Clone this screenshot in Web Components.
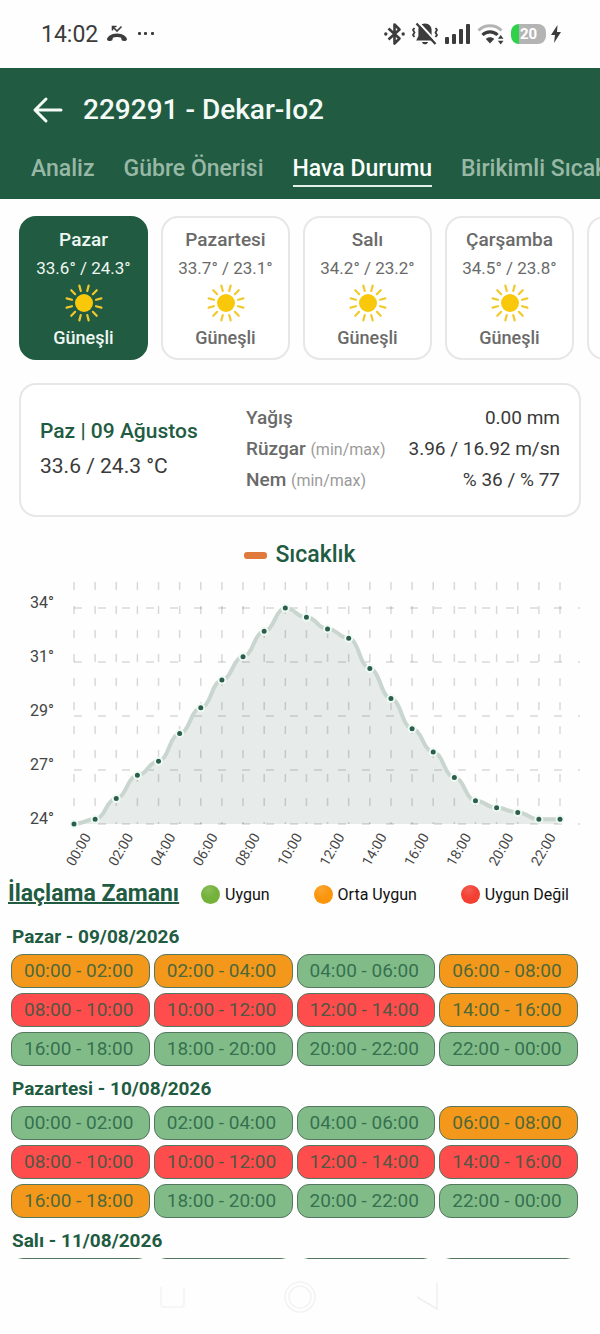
<!DOCTYPE html>
<html lang="tr">
<head>
<meta charset="utf-8">
<meta name="viewport" content="width=device-width, initial-scale=1">
<title>229291 - Dekar-Io2</title>
<style>
  :root {
    --green: #215b41;
    --line: #e7e7e7;
    --gray: #6a6a6a;
    --dark: #3a3a3a;
  }
  body {
    margin: 0;
    background: #fefefe;
    font-family: Roboto, "Liberation Sans", sans-serif;
  }
</style>
</head>
<body>
<weather-page></weather-page>

<script>
const define = (tagName, html, setup) => {
  const template = document.createElement('template');
  template.innerHTML = html;
  window.customElements.define(tagName, class extends HTMLElement {
    constructor() {
      super();
      this.attachShadow({ mode: 'open' });
      this.shadowRoot.appendChild(template.content.cloneNode(true));
    }

    connectedCallback() {
      if (setup) {
        setup(this, this.shadowRoot);
      }
    }
  });
};

define('status-bar', `
  <style>
    :host {
      display: flex;
      align-items: center;
      justify-content: space-between;
      height: 68px;
      padding: 0 39px 0 41px;
      box-sizing: border-box;
      color: #3c3c3c;
      font-size: 23px;
    }
    div { display: flex; align-items: center; gap: 8px; }
    svg { display: block; }
    .icons { gap: 7px; }
    .battery {
      display: flex;
      align-items: center;
      justify-content: center;
      width: 35px;
      height: 20px;
      border-radius: 8px;
      background: linear-gradient(90deg, #2fd14b 8px, #b4b4b4 8px);
      color: #fff;
      font-size: 15px;
      font-weight: 700;
    }
    .power { gap: 5px; }
  </style>
  <div>
    <span>14:02</span>
    <svg width="22" height="18" viewBox="0 0 22 18" aria-hidden="true">
      <path d="M1 14.5c0-2.500 4-6 10-6s10 3.500 10 6c-.8 1.800-3.800 1.900-5.300.8l-.6-2.600c-2.600-1-5.600-1-8.200 0l-.6 2.600c-1.500 1.100-4.500 1-5.300-.8z" fill="currentColor"/>
      <path d="M6.500 5.500V1.500h4M7 2l4 4 4.500-4.500" fill="none" stroke="currentColor" stroke-width="1.600"/>
    </svg>
    <svg width="20" height="6" viewBox="0 0 20 6" fill="currentColor" aria-hidden="true">
      <rect x="2" y="1" width="3" height="3" rx="1"/><rect x="8" y="1" width="3" height="3" rx="1"/><rect x="15" y="1" width="3" height="3" rx="1"/>
    </svg>
  </div>
  <div class="icons">
    <svg width="21" height="24" viewBox="0 0 21 24" aria-hidden="true">
      <path d="M4.500 6.500l11 10-5 5V2.500l5 5-11 10" fill="none" stroke="currentColor" stroke-width="2.600" stroke-linejoin="round"/>
      <circle cx="1.800" cy="12" r="1.700" fill="currentColor"/><circle cx="19.200" cy="12" r="1.700" fill="currentColor"/>
    </svg>
    <svg width="26" height="24" viewBox="0 0 26 24" aria-hidden="true">
      <path d="M13 1.500c4.200 0 6.600 3 6.600 6.500V14l2.200 4.500H4.200L6.400 14V8c0-3.500 2.400-6.500 6.600-6.500zM10 20h6c-.4 1.600-1.500 2.300-3 2.300S10.400 21.600 10 20z" fill="currentColor"/>
      <path d="M2.500 6l-1.500 2 1.500 2.500L1 13l1.500 2M23.500 6L25 8l-1.500 2.500L25 13l-1.500 2" fill="none" stroke="currentColor" stroke-width="1.800"/>
      <path d="M6.500 .5L25 20.500" stroke="#fefefe" stroke-width="2.200"/>
      <path d="M4.500 1.500L23.500 22" stroke="currentColor" stroke-width="2.200"/>
    </svg>
    <svg width="25" height="22" viewBox="0 0 25 22" fill="currentColor" aria-hidden="true">
      <rect x="0" y="14" width="4" height="7" rx="1"/><rect x="7" y="11" width="4" height="10" rx="1"/>
      <rect x="14" y="6" width="4" height="15" rx="1"/><rect x="21" y="1" width="4" height="20" rx="1"/>
    </svg>
    <svg width="27" height="22" viewBox="0 0 27 22" aria-hidden="true">
      <path d="M1.500 7.500c6-6.300 17-6.300 23 0" fill="none" stroke="#b4b4b4" stroke-width="3"/>
      <path d="M5.500 12c4-4.300 11-4.300 15 0" fill="none" stroke="currentColor" stroke-width="3.200"/>
      <path d="M8.800 16c2.200-2.300 6.200-2.300 8.400 0L13 20.500z" fill="currentColor"/>
      <path d="M23.700 12l2.800 3.800h-5.600zM23.700 21.500l2.800-3.800h-5.600z" fill="currentColor"/>
    </svg>
    <div class="power">
      <span class="battery">20</span>
      <svg width="10" height="20" viewBox="0 0 10 20" aria-hidden="true">
        <path d="M6.500 1L0 11h4l-1 8 7-11H6z" fill="currentColor"/>
      </svg>
    </div>
  </div>
`);

define('app-header', `
  <style>
    :host {
      display: block;
      background: var(--green);
      color: #f4faf6;
    }
    header {
      display: flex;
      align-items: center;
      gap: 20px;
      padding: 24px 32px 0;
    }
    button {
      padding: 0;
      border: 0;
      background: none;
      color: inherit;
      cursor: pointer;
    }
    svg { display: block; }
    h1 {
      margin: 0;
      font-size: 28px;
      line-height: 36px;
      font-weight: 500;
    }
    nav {
      display: flex;
      gap: 29px;
      padding: 24px 31px 12px;
      overflow: hidden;
    }
    a {
      flex: none;
      border-bottom: 2px solid transparent;
      color: #98b8a6;
      font-size: 23px;
      line-height: 33px;
      font-weight: 500;
      text-decoration: none;
    }
    a[aria-current] {
      border-color: #e3efe8;
      color: #fafffc;
    }
  </style>
  <header>
    <button type="button" aria-label="Geri">
      <svg width="31" height="28" viewBox="0 0 31 28" fill="none" stroke="currentColor" stroke-width="3" stroke-linecap="round" stroke-linejoin="round">
        <path d="M14 3L3 14l11 11M3 14h26"/>
      </svg>
    </button>
    <h1>229291 - Dekar-Io2</h1>
  </header>
  <nav>
    <a href="#analiz">Analiz</a>
    <a href="#gubre">Gübre Önerisi</a>
    <a href="#hava" aria-current="page">Hava Durumu</a>
    <a href="#birikimli">Birikimli Sıcaklık</a>
  </nav>
`);

define('sun-icon', `
  <style>
    :host, svg { display: block; }
  </style>
  <svg width="38" height="38" viewBox="-19 -19 38 38" aria-hidden="true">
    <circle r="9" fill="#f9c80a"/>
    <g stroke="#f2c92c" stroke-width="2.200" stroke-linecap="round"></g>
  </svg>
`, (host, root) => {
  let rays = '';
  for (let angle = 15; angle < 375; angle += 30) {
    rays += `<line y1="12.500" y2="18" transform="rotate(${angle})"/>`;
  }
  root.querySelector('g').innerHTML = rays;
});

define('day-card', `
  <style>
    :host { display: block; flex: none; width: 129px; }
    button {
      display: flex;
      flex-direction: column;
      align-items: center;
      gap: 4px;
      width: 100%;
      padding: 10px 0 8px;
      border: 2px solid var(--line);
      border-radius: 17px;
      background: #fff;
      color: var(--gray);
      font: 500 18px/24px Roboto, "Liberation Sans", sans-serif;
      white-space: nowrap;
      cursor: pointer;
    }
    .name { font-size: 19px; }
    .range { font-size: 17px; font-weight: 400; }
    :host([selected]) button {
      border-color: var(--green);
      background: var(--green);
      color: #eef7f1;
    }
  </style>
  <button type="button">
    <span class="name"><slot name="name"></slot></span>
    <span class="range"><slot></slot></span>
    <sun-icon></sun-icon>
    <span>Güneşli</span>
  </button>
`, (host, root) => {
  root.querySelector('button').setAttribute('aria-pressed', host.hasAttribute('selected'));
});

define('day-strip', `
  <style>
    :host {
      display: flex;
      gap: 13px;
      padding: 17px 0 0 19px;
      overflow: hidden;
    }
  </style>
  <slot></slot>
`);

define('day-summary', `
  <style>
    :host {
      display: flex;
      align-items: center;
      margin: 23px 19px 0;
      padding: 17px 19px 20px;
      border: 2px solid var(--line);
      border-radius: 17px;
      background: #fff;
      color: var(--dark);
      font-size: 19px;
      line-height: 31px;
    }
    .today { flex: 0 0 206px; font-size: 21px; line-height: 35px; }
    h2 {
      margin: 0;
      color: var(--green);
      font-size: 21px;
      line-height: 35px;
      font-weight: 500;
    }
    dl { flex: 1; margin: 0; }
    dl div { display: flex; justify-content: space-between; height: 31px; white-space: nowrap; }
    dt { color: var(--gray); font-weight: 500; }
    dd { margin: 0; }
    small { color: #9a9a9a; font-size: 16px; font-weight: 400; }
  </style>
  <div class="today">
    <h2>Paz | 09 Ağustos</h2>
    33.6 / 24.3 °C
  </div>
  <dl>
    <div><dt>Yağış</dt><dd>0.00 mm</dd></div>
    <div><dt>Rüzgar <small>(min/max)</small></dt><dd>3.96 / 16.92 m/sn</dd></div>
    <div><dt>Nem <small>(min/max)</small></dt><dd>% 36 / % 77</dd></div>
  </dl>
`);

define('temperature-chart', `
  <style>
    :host { display: block; padding-top: 24px; }
    .legend {
      display: flex;
      align-items: center;
      justify-content: center;
      gap: 8px;
      color: var(--green);
      font-size: 23px;
      line-height: 28px;
      font-weight: 500;
    }
    .legend i {
      width: 23px;
      height: 7px;
      border-radius: 3px;
      background: #df7a3c;
    }
    svg { display: block; width: 100%; height: auto; }
    text { font-size: 16px; fill: #444; }
    .hour { font-size: 14px; }
  </style>
  <div class="legend"><i></i>Sıcaklık</div>
  <svg viewBox="0 0 600 308" role="img" aria-label="Sıcaklık"></svg>
`, (host, root) => {
  const temps = [
    24.3, 24.5, 25.4, 26.4, 27, 28.2, 29.3, 30.5, 31.5, 32.6, 33.6, 33.2,
    32.7, 32.3, 31, 29.7, 28.4, 27.4, 26.3, 25.3, 25, 24.8, 24.5, 24.5,
  ];
  const left = 74;
  const top = 39;
  const bottom = 255;
  const step = (560 - left) / (temps.length - 1);
  const min = Math.min(...temps);
  const scale = (bottom - top) / (Math.max(...temps) - min);
  const points = temps.map((temp, i) => [left + i * step, bottom - (temp - min) * scale]);

  let curve = `M${points[0]}`;
  points.slice(1).forEach(([x, y], i) => {
    const [px, py] = points[i];
    const mid = (px + x) / 2;
    curve += `Q${(px + mid) / 2},${py} ${mid},${(py + y) / 2}`;
    curve += `Q${(mid + x) / 2},${y} ${x},${y}`;
  });

  let grid = '';
  let labels = '';
  let dots = '';
  ['34°', '31°', '29°', '27°', '24°'].forEach((label, i) => {
    const y = top + i * 54;
    grid += `<line x1="${left}" x2="580" y1="${y}" y2="${y}"/>`;
    labels += `<text x="54" y="${y}" text-anchor="end">${label}</text>`;
  });
  points.forEach(([x, y], i) => {
    grid += `<line x1="${x}" x2="${x}" y1="13" y2="${bottom}"/>`;
    dots += `<circle cx="${x}" cy="${y}" r="3.500"/>`;
    if (i % 2 === 0) {
      const hour = String(i).padStart(2, '0');
      labels += `<text class="hour" transform="translate(${x} 298) rotate(-60)">${hour}:00</text>`;
    }
  });

  root.querySelector('svg').innerHTML = `
    <path d="${curve}V${bottom}H${left}z" fill="#e7ebe9"/>
    <g stroke="#000" stroke-opacity=".15" stroke-width="1.500" stroke-dasharray="8 16">${grid}</g>
    <path d="${curve}" fill="none" stroke="#c8d6cf" stroke-width="4"/>
    <g fill="#2b5f4c" stroke="#f0faf5" stroke-width="2">${dots}</g>
    ${labels}
  `;
});

define('spray-legend', `
  <style>
    :host { display: flex; align-items: center; padding: 0 9px 3px 8px; }
    h2 {
      margin: 0;
      color: var(--green);
      font-size: 23px;
      line-height: 34px;
      font-weight: 700;
      text-decoration: underline;
      text-decoration-thickness: 2px;
      white-space: nowrap;
    }
    ul {
      display: flex;
      flex: 1;
      justify-content: space-around;
      margin: 0;
      padding: 0;
      list-style: none;
      color: #111;
      font-size: 16px;
      white-space: nowrap;
    }
    li { display: flex; align-items: center; gap: 5px; }
    i {
      width: 19px;
      height: 19px;
      border-radius: 50%;
      background: radial-gradient(circle at 40% 25%, #ffffff26, #ffffff00 45%) var(--dot);
    }
  </style>
  <h2>İlaçlama Zamanı</h2>
  <ul>
    <li style="--dot: #74b23c"><i></i>Uygun</li>
    <li style="--dot: #fb950c"><i></i>Orta Uygun</li>
    <li style="--dot: #f24033"><i></i>Uygun Değil</li>
  </ul>
`);

// levels: one letter per two-hour slot, g = uygun, o = orta uygun, r = uygun değil
define('spray-day', `
  <style>
    :host { display: block; padding: 11px 22px 0 11px; }
    h3 {
      margin: 0 1px 5px;
      color: var(--green);
      font-size: 19px;
      line-height: 24px;
      font-weight: 700;
    }
    ol {
      display: grid;
      grid-template-columns: repeat(4, 1fr);
      gap: 5px 4px;
      margin: 0;
      padding: 0;
      list-style: none;
    }
    li {
      padding-left: 12px;
      border: 1px solid #53775f;
      border-radius: 12px;
      color: #215b41cc;
      font-size: 19px;
      line-height: 32px;
      white-space: nowrap;
    }
    .g { background: #81bb88; }
    .o { background: #f3981b; }
    .r { background: #ff4c4c; }
  </style>
  <h3><slot></slot></h3>
  <ol></ol>
`, (host, root) => {
  const hour = value => `${String(value % 24).padStart(2, '0')}:00`;
  root.querySelector('ol').innerHTML = [...host.getAttribute('levels')]
    .map((level, i) => `<li class="${level}">${hour(i * 2)} - ${hour(i * 2 + 2)}</li>`)
    .join('');
});

define('nav-bar', `
  <style>
    :host {
      display: flex;
      align-items: center;
      justify-content: center;
      gap: 96px;
      height: 75px;
    }
    button { padding: 0; border: 0; background: none; }
    svg { display: block; }
  </style>
  <button type="button" aria-label="Son uygulamalar">
    <svg width="32" height="32" viewBox="0 0 32 32" fill="none" stroke="#f3f3f3" stroke-width="1.500">
      <path d="M5 6v17a3 3 0 0 0 3 3h17a3 3 0 0 0 3-3V6"/>
    </svg>
  </button>
  <button type="button" aria-label="Ana ekran">
    <svg width="32" height="32" viewBox="0 0 32 32" fill="none" stroke="#f3f3f3" stroke-width="1.500">
      <circle cx="16" cy="16" r="15"/><circle cx="16" cy="16" r="11"/>
    </svg>
  </button>
  <button type="button" aria-label="Geri">
    <svg width="32" height="32" viewBox="0 0 32 32" fill="none" stroke="#efefef" stroke-width="1.500">
      <path d="M5 16l20 12V2"/>
    </svg>
  </button>
`);

define('weather-page', `
  <style>
    :host {
      display: flex;
      flex-direction: column;
      height: 100vh;
      overflow: hidden;
    }
    status-bar, app-header, nav-bar { flex: none; }
    main { flex: 1; min-height: 0; overflow: hidden; }
  </style>
  <status-bar></status-bar>
  <app-header></app-header>
  <main>
    <day-strip>
      <day-card selected><span slot="name">Pazar</span>33.6° / 24.3°</day-card>
      <day-card><span slot="name">Pazartesi</span>33.7° / 23.1°</day-card>
      <day-card><span slot="name">Salı</span>34.2° / 23.2°</day-card>
      <day-card><span slot="name">Çarşamba</span>34.5° / 23.8°</day-card>
      <day-card><span slot="name">Perşembe</span>34.1° / 23.5°</day-card>
    </day-strip>
    <day-summary></day-summary>
    <temperature-chart></temperature-chart>
    <spray-legend></spray-legend>
    <spray-day levels="oogorrrogggg">Pazar - 09/08/2026</spray-day>
    <spray-day levels="gggorrrroggg">Pazartesi - 10/08/2026</spray-day>
    <spray-day levels="gggorrrroggg">Salı - 11/08/2026</spray-day>
  </main>
  <nav-bar></nav-bar>
`);
</script>
</body>
</html>
